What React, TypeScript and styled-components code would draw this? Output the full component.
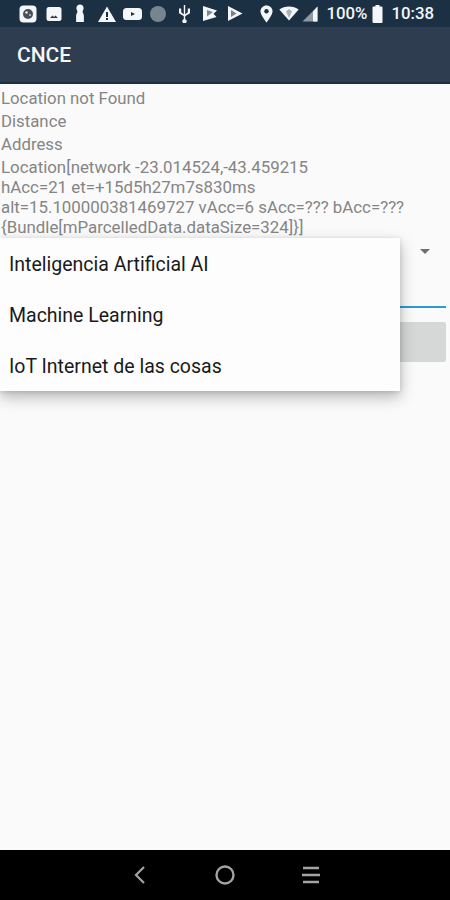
import React from "react";
import styled, { createGlobalStyle } from "styled-components";

const Global = createGlobalStyle`
  html, body { margin: 0; padding: 0; background: #fafafa; }
  body { font-family: Roboto, "Liberation Sans", sans-serif; }
  #root { width: 450px; height: 900px; }
`;

const Screen = styled.div`
  width: 450px;
  height: 900px;
  display: flex;
  flex-direction: column;
  overflow: hidden;
  background: #fafafa;
`;

const StatusBar = styled.div`
  height: 27px;
  background: #1c3044;
  display: flex;
  align-items: center;
  justify-content: space-between;
  padding: 0 16px 0 19px;
  color: #f4f6f8;
  flex: none;
`;

const IconGroup = styled.div`
  display: flex;
  align-items: center;
`;

const StatusText = styled.span<{ $left: number }>`
  font-size: 16.8px;
  font-weight: 500;
  line-height: 27px;
  margin-left: ${(p) => p.$left}px;
`;

const AppBar = styled.header`
  height: 57px;
  flex: none;
  background: #2e3e50;
  border-bottom: 2px solid #1a3044;
  box-sizing: border-box;
  display: flex;
  align-items: center;
  padding-left: 17px;
  color: #f5f7f9;
  font-size: 21px;
  font-weight: 500;
`;

const Content = styled.main`
  position: relative;
  flex: 1;
  display: flex;
  flex-direction: column;
  padding: 3px 4px 0 1px;
`;

const Label = styled.div`
  font-size: 16.8px;
  line-height: 23px;
  color: #858585;
`;

const LocationText = styled.div`
  font-size: 16.85px;
  line-height: 20px;
  color: #858585;
  margin-top: 1px;
  white-space: pre;
`;

const SpinnerRow = styled.div`
  height: 71px;
  display: flex;
  justify-content: flex-end;
  padding: 12px 16px 0 0;
  box-sizing: border-box;
  border-bottom: 2px solid #2a9bd4;
`;

const Arrow = styled.div`
  width: 0;
  height: 0;
  border-left: 5px solid transparent;
  border-right: 5px solid transparent;
  border-top: 5px solid #6f6f6f;
`;

const GrayButton = styled.div`
  height: 40px;
  margin-top: 14px;
  background: #d6d7d7;
  border-radius: 2px;
`;

const Menu = styled.div`
  position: absolute;
  left: 0;
  top: 154px;
  width: 400px;
  height: 153px;
  background: #fdfdfd;
  box-shadow: 0 6px 14px rgba(0, 0, 0, 0.28), 0 1px 4px rgba(0, 0, 0, 0.12);
  display: flex;
  flex-direction: column;
  padding-top: 1px;
  box-sizing: border-box;
`;

const MenuItem = styled.div`
  height: 51px;
  flex: none;
  display: flex;
  align-items: center;
  padding-left: 9px;
  font-size: 19.5px;
  color: #1a1a1a;
`;

const NavBar = styled.nav`
  height: 50px;
  flex: none;
  background: #000;
  display: flex;
  align-items: center;
  color: #a3a3a3;
  padding-left: 132px;
  gap: 66px;
`;

const Svg = styled.svg<{ $left: number }>`
  display: block;
  flex: none;
  margin-left: ${(p) => p.$left}px;
`;

const Icon = ({ w, h, left = 0, children }: { w: number; h: number; left?: number; children: React.ReactNode }) => (
  <Svg $left={left} width={w} height={h} viewBox={`0 0 ${w} ${h}`} fill="currentColor">
    {children}
  </Svg>
);

const BG = "#1c3044";

export default function App() {
  return (
    <Screen>
      <Global />
      <StatusBar>
        <IconGroup>
          <Icon w={18} h={18}>
            <rect x="0.5" y="0.5" width="17" height="17" rx="4" />
            <circle cx="9" cy="9" r="5" fill="#46505a" />
            <circle cx="7.500" cy="7.500" r="1.300" fill="#e8e8e8" />
            <circle cx="11" cy="10" r="1" fill="#c8c8c8" />
          </Icon>
          <Icon w={16} h={16} left={9}>
            <rect x="0.5" y="1" width="15" height="14" rx="2.500" />
            <path d="M4 12l2.500-2.500 1.500 1.500 1.500-1.500L12 12z" fill="#2a3a4a" />
          </Icon>
          <Icon w={12} h={19} left={12}>
            <path d="M6 .5c2.200 0 3.600 1.600 3.600 3.500 0 1.500-.8 2.400-1 3.600-.1 1 .5 1.600.9 2.400.3.700.4 1.500.4 2.500v5.500H2.100V12.500c0-1 .1-1.800.4-2.500.4-.8 1-1.400.9-2.400-.2-1.200-1-2.100-1-3.600C2.400 2.100 3.800.5 6 .5z" />
          </Icon>
          <Icon w={18} h={16} left={12}>
            <path d="M9 .5l9 15.500H0z" />
            <rect x="8" y="6" width="2" height="5" fill={BG} />
            <rect x="8" y="12" width="2" height="2" fill={BG} />
          </Icon>
          <Icon w={19} h={14} left={7}>
            <rect y="1" width="19" height="12" rx="3.500" />
            <path d="M8 5l4 2-4 2z" fill={BG} />
          </Icon>
          <Icon w={16} h={16} left={8}>
            <circle cx="8" cy="8" r="8" fill="#77858f" />
          </Icon>
          <Icon w={13} h={18} left={12}>
            <path d="M5.800 0h1.400v14.200a2.200 2.200 0 1 1-1.400 0z" />
            <path d="M1 3.500h2.200v3.800l2.800 2.200v1.700L1 8.300z" />
            <path d="M12 3.500H9.800v3.800L7 9.500v1.700l5-2.900z" />
          </Icon>
          <Icon w={16} h={17} left={11}>
            <path d="M1 1l14 4.500-3.500 3.300 3 3.200L1 16z" />
            <path d="M5 5l6 2-6 4.500z" fill={BG} opacity="0.55" />
          </Icon>
          <Icon w={16} h={17} left={9}>
            <path d="M1 1l14.500 7.500L1 16z" />
            <path d="M4 5l5.500 3.500L4 12z" fill="#75818d" />
          </Icon>
        </IconGroup>
        <IconGroup>
          <Icon w={13} h={18}>
            <path d="M6.500 .5C3 .5.5 3 .5 6.300c0 4 6 11.200 6 11.200s6-7.200 6-11.200C12.500 3 10 .5 6.500 .5z" />
            <circle cx="6.500" cy="6.300" r="2.200" fill={BG} />
          </Icon>
          <Icon w={20} h={15} left={6}>
            <path d="M10 14.500L.3 3.500C3 1.500 6.300.5 10 .5s7 1 9.700 3z" />
            <path d="M10 12L7 5.500 10 3l3 2.500z" fill="#a9b1ba" />
          </Icon>
          <Icon w={16} h={16} left={3}>
            <path d="M15.500 .5v15H.5z" fill="#8e99a4" />
            <path d="M15.500 .5v15H11V5.500z" />
          </Icon>
          <StatusText $left={8}>100%</StatusText>
          <Icon w={11} h={19} left={5}>
            <path d="M3.500 1h4v1.500h2a1 1 0 0 1 1 1V18a1 1 0 0 1-1 1h-8a1 1 0 0 1-1-1V3.500a1 1 0 0 1 1-1h2z" />
          </Icon>
          <StatusText $left={8}>10:38</StatusText>
        </IconGroup>
      </StatusBar>
      <AppBar>CNCE</AppBar>
      <Content>
        <Label>Location not Found</Label>
        <Label>Distance</Label>
        <Label>Address</Label>
        <LocationText>
          {"Location[network -23.014524,-43.459215\nhAcc=21 et=+15d5h27m7s830ms\nalt=15.100000381469727 vAcc=6 sAcc=??? bAcc=???\n{Bundle[mParcelledData.dataSize=324]}]"}
        </LocationText>
        <SpinnerRow>
          <Arrow />
        </SpinnerRow>
        <GrayButton />
        <Menu>
          <MenuItem>Inteligencia Artificial AI</MenuItem>
          <MenuItem>Machine Learning</MenuItem>
          <MenuItem>IoT Internet de las cosas</MenuItem>
        </Menu>
      </Content>
      <NavBar>
        <Icon w={16} h={20}>
          <path d="M12 2L4 10l8 8" fill="none" stroke="currentColor" strokeWidth="2.200" />
        </Icon>
        <Icon w={22} h={22}>
          <circle cx="11" cy="11" r="8.500" fill="none" stroke="currentColor" strokeWidth="2.400" />
        </Icon>
        <Icon w={20} h={20} left={-1}>
          <path d="M2 3h16M1 10h18M2 17h16" fill="none" stroke="currentColor" strokeWidth="2.400" />
        </Icon>
      </NavBar>
    </Screen>
  );
}
